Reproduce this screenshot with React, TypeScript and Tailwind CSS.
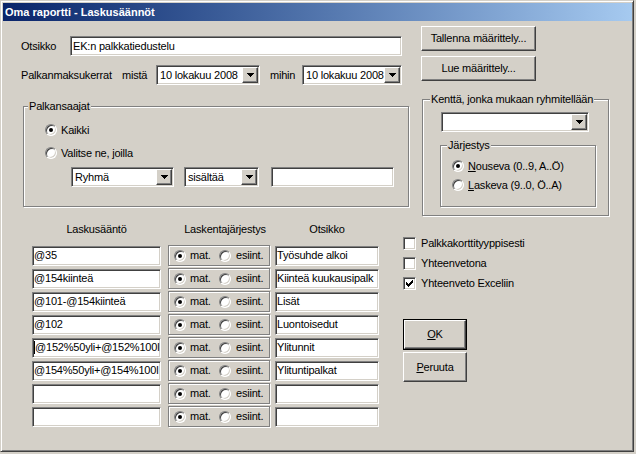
import React from "react";

const sunken =
  "border border-t-[#808080] border-l-[#808080] border-b-white border-r-white shadow-[inset_1px_1px_0_#404040,inset_-1px_-1px_0_#d4d0c8]";
const raised =
  "border border-t-white border-l-white border-b-[#404040] border-r-[#404040] shadow-[inset_-1px_-1px_0_#808080]";
const etched = "border border-[#808080] shadow-[1px_1px_0_#fff,inset_1px_1px_0_#fff]";

function Radio({ checked }: { checked?: boolean }) {
  return (
    <span
      className={`w-[12px] h-[12px] rounded-full bg-white shrink-0 flex items-center justify-center ${sunken}`}
    >
      {checked && <span className="w-[4px] h-[4px] rounded-full bg-black" />}
    </span>
  );
}

function Check({ checked }: { checked?: boolean }) {
  return (
    <span className={`w-[13px] h-[13px] bg-white shrink-0 flex items-center justify-center ${sunken}`}>
      {checked && (
        <svg width="7" height="7" viewBox="0 0 7 7">
          <path
            d="M0 2h1v3h-1z M1 3h1v3h-1z M2 4h1v3h-1z M3 3h1v3h-1z M4 2h1v3h-1z M5 1h1v3h-1z M6 0h1v3h-1z"
            fill="#000"
          />
        </svg>
      )}
    </span>
  );
}

function Arrow() {
  return (
    <span className={`w-[16px] h-full shrink-0 bg-[#d4d0c8] flex items-center justify-center ${raised}`}>
      <svg width="7" height="4" viewBox="0 0 7 4">
        <path d="M0 0h7v1h-7z M1 1h5v1h-5z M2 2h3v1h-3z M3 3h1v1h-1z" fill="#000" />
      </svg>
    </span>
  );
}

function Combo({ value, className }: { value: string; className: string }) {
  return (
    <div className={`h-[20px] bg-white p-[1px] flex items-stretch ${sunken} ${className}`}>
      <span className="flex-1 overflow-hidden whitespace-nowrap pl-[2px] leading-[16px]">{value}</span>
      <Arrow />
    </div>
  );
}

function Field({ value, className, caret }: { value?: string; className: string; caret?: boolean }) {
  return (
    <div
      className={`h-[20px] bg-white flex items-center overflow-hidden whitespace-nowrap pl-[1px] ${sunken} ${className}`}
    >
      {caret && <span className="w-[1px] h-[13px] bg-black shrink-0" />}
      <span>{value}</span>
    </div>
  );
}

function Button({ children, isDefault, className }: { children: React.ReactNode; isDefault?: boolean; className: string }) {
  if (isDefault) {
    return (
      <div className={`border border-black flex ${className}`}>
        <div className={`flex-1 flex items-center justify-center bg-[#d4d0c8] ${raised}`}>{children}</div>
      </div>
    );
  }
  return <div className={`flex items-center justify-center bg-[#d4d0c8] ${raised} ${className}`}>{children}</div>;
}

function GroupLabel({ text, className }: { text: string; className: string }) {
  return (
    <span className={`absolute -top-[8px] bg-[#d4d0c8] px-[1px] leading-[14px] ${className}`}>{text}</span>
  );
}

const rows = [
  { rule: "@35", title: "Työsuhde alkoi" },
  { rule: "@154kiinteä", title: "Kiinteä kuukausipalk" },
  { rule: "@101-@154kiinteä", title: "Lisät" },
  { rule: "@102", title: "Luontoisedut" },
  { rule: "@152%50yli+@152%100l", title: "Ylitunnit", caret: true },
  { rule: "@154%50yli+@154%100l", title: "Ylituntipalkat" },
  { rule: "", title: "" },
  { rule: "", title: "" },
];

export default function App() {
  return (
    <div
      className="w-[636px] h-[454px] bg-[#d4d0c8] text-black text-[11px] tracking-[-0.2px] overflow-hidden"
      style={{ fontFamily: "'Liberation Sans', Arial, sans-serif" }}
    >
      <div
        className="w-[634px] h-[452px] bg-[#d4d0c8] border border-t-[#d4d0c8] border-l-[#d4d0c8] border-b-[#404040] border-r-[#404040] shadow-[inset_1px_1px_0_#fff,inset_-1px_-1px_0_#808080] pt-[2px] pl-[2px] pr-[1px] flex flex-col"
      >
        {/* title bar */}
        <div className="h-[18px] bg-linear-to-r from-[#0a246a] to-[#a6caf0] flex items-center pl-[2px]">
          <span className="text-white font-bold text-[11px] leading-[18px] tracking-normal">
            Oma raportti - Laskusäännöt
          </span>
        </div>

        {/* top section */}
        <div className="flex items-start">
          {/* left column */}
          <div className="ml-[18px] w-[390px] flex flex-col">
            <div className="mt-[15px] h-[20px] flex items-center">
              <span className="w-[49px]">Otsikko</span>
              <Field value="EK:n palkkatiedustelu" className="w-[332px] pl-[2px]" />
            </div>
            <div className="mt-[9px] h-[20px] flex items-center">
              <span className="w-[101px]">Palkanmaksukerrat</span>
              <span className="w-[34px]">mistä</span>
              <Combo value="10 lokakuu 2008" className="w-[104px]" />
              <span className="ml-[10px] w-[32px]">mihin</span>
              <Combo value="10 lokakuu 2008" className="w-[100px]" />
            </div>
            <div className={`relative mt-[21px] ml-[2px] w-[386px] h-[101px] ${etched} flex flex-col pl-[21px]`}>
              <GroupLabel text="Palkansaajat" className="left-[4px]" />
              <div className="mt-[17px] h-[12px] flex items-center gap-[4px]">
                <Radio checked />
                <span>Kaikki</span>
              </div>
              <div className="mt-[11px] h-[12px] flex items-center gap-[4px]">
                <Radio />
                <span>Valitse ne, joilla</span>
              </div>
              <div className="mt-[8px] ml-[26px] flex items-center">
                <Combo value="Ryhmä" className="w-[103px]" />
                <Combo value="sisältää" className="w-[75px] ml-[10px]" />
                <Field className="w-[123px] ml-[12px]" />
              </div>
            </div>
          </div>

          {/* right column */}
          <div className="ml-[10px] flex flex-col">
            <Button className="mt-[5px] w-[115px] h-[25px]">Tallenna määrittely...</Button>
            <Button className="mt-[5px] w-[115px] h-[25px]">Lue määrittely...</Button>
            <div className={`relative mt-[18px] ml-[1px] w-[187px] h-[117px] ${etched} flex flex-col`}>
              <GroupLabel text="Kenttä, jonka mukaan ryhmitellään" className="left-[7px]" />
              <Combo value="" className="mt-[12px] ml-[18px] w-[148px]" />
              <div className={`relative mt-[13px] ml-[17px] w-[156px] h-[62px] ${etched} flex flex-col pl-[11px]`}>
                <GroupLabel text="Järjestys" className="left-[6px]" />
                <div className="mt-[14px] h-[12px] flex items-center gap-[4px]">
                  <Radio checked />
                  <span>
                    <span className="underline">N</span>ouseva (0..9, A..Ö)
                  </span>
                </div>
                <div className="mt-[7px] h-[12px] flex items-center gap-[4px]">
                  <Radio />
                  <span>
                    <span className="underline">L</span>askeva (9..0, Ö..A)
                  </span>
                </div>
              </div>
            </div>
          </div>
        </div>

        {/* bottom section */}
        <div className="mt-[6px] flex items-start">
          <div className="ml-[29px] w-[347px] flex flex-col">
            <div className="h-[14px] flex items-center">
              <span className="w-[129px] text-center">Laskusääntö</span>
              <span className="ml-[7px] w-[102px] text-center pl-[12px]">Laskentajärjestys</span>
              <span className="ml-[5px] w-[104px] text-center">Otsikko</span>
            </div>
            <div className="mt-[9px] flex flex-col gap-[2px]">
              {rows.map((r, i) => (
                <div key={i} className="h-[21px] flex items-center">
                  <Field value={r.rule} caret={r.caret} className="w-[129px]" />
                  <div className={`ml-[7px] w-[102px] h-[21px] ${etched} flex items-center pl-[5px]`}>
                    <Radio checked />
                    <span className="ml-[4px] w-[29px]">mat.</span>
                    <Radio />
                    <span className="ml-[5px]">esiint.</span>
                  </div>
                  <Field value={r.title} className="ml-[5px] w-[104px]" />
                </div>
              ))}
            </div>
          </div>

          <div className="ml-[24px] flex flex-col">
            <div className="mt-[11px] h-[20px] flex items-center gap-[5px]">
              <Check />
              <span>Palkkakorttityyppisesti</span>
            </div>
            <div className="h-[20px] flex items-center gap-[5px]">
              <Check />
              <span>Yhteenvetona</span>
            </div>
            <div className="h-[20px] flex items-center gap-[5px]">
              <Check checked />
              <span>Yhteenveto Exceliin</span>
            </div>
            <Button isDefault className="mt-[26px] w-[64px] h-[31px]">
              <span>
                <span className="underline">O</span>K
              </span>
            </Button>
            <Button className="mt-[2px] w-[64px] h-[30px]">
              <span>
                <span className="underline">P</span>eruuta
              </span>
            </Button>
          </div>
        </div>
      </div>
    </div>
  );
}
